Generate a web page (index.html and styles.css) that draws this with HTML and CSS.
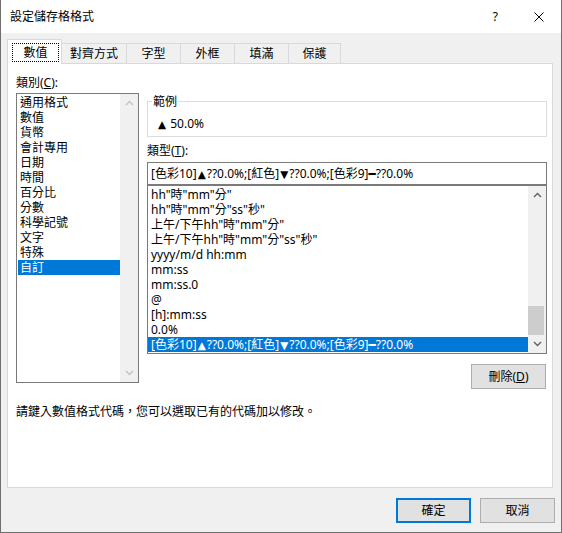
FILE: index.html
```html
<!DOCTYPE html>
<html lang="zh-Hant">
<head>
<meta charset="utf-8">
<title>設定儲存格格式</title>
<link rel="stylesheet" href="styles.css">
</head>
<body>
<div class="dialog">
  <div class="titlebar">
    <span class="title">設定儲存格格式</span>
    <span class="help">?</span>
    <span class="close"><svg width="10" height="10" viewBox="0 0 10 10"><path d="M0.5 0.5 L9.5 9.5 M9.5 0.5 L0.5 9.5" stroke="#000" stroke-width="1" fill="none"/></svg></span>
  </div>
  <div class="body">
    <div class="tabs">
      <div class="tab active"><span class="focus">數值</span></div>
      <div class="tab w65">對齊方式</div>
      <div class="tab w54">字型</div>
      <div class="tab w54">外框</div>
      <div class="tab w54">填滿</div>
      <div class="tab w52">保護</div>
    </div>
    <div class="panel">
      <div class="cols">
        <div class="leftcol">
          <div class="label">類別(<u>C</u>):</div>
          <div class="listbox cat">
            <ul class="items">
              <li>通用格式</li>
              <li>數值</li>
              <li>貨幣</li>
              <li>會計專用</li>
              <li>日期</li>
              <li>時間</li>
              <li>百分比</li>
              <li>分數</li>
              <li>科學記號</li>
              <li>文字</li>
              <li>特殊</li>
              <li class="sel">自訂</li>
            </ul>
            <div class="vscroll disabled">
              <div class="arrow"><svg width="9" height="6" viewBox="0 0 9 6"><path d="M1 5 L4.5 1.5 L8 5" fill="none" stroke="currentColor" stroke-width="1.4"/></svg></div>
              <div class="track"></div>
              <div class="arrow"><svg width="9" height="6" viewBox="0 0 9 6"><path d="M1 1 L4.5 4.5 L8 1" fill="none" stroke="currentColor" stroke-width="1.4"/></svg></div>
            </div>
          </div>
        </div>
        <div class="rightcol">
          <fieldset class="sample">
            <legend>範例</legend>
            <div class="sample-val"><span class="tri">▲</span> 50.0%</div>
          </fieldset>
          <div class="label type-label">類型(<u>T</u>):</div>
          <div class="textbox">[色彩10]<span class="tri">▲</span>??0.0%;[紅色]<span class="tri">▼</span>??0.0%;[色彩9]<span class="bar">━</span>??0.0%</div>
          <div class="listbox fmt">
            <ul class="items">
              <li>hh"時"mm"分"</li>
              <li>hh"時"mm"分"ss"秒"</li>
              <li>上午/下午hh"時"mm"分"</li>
              <li>上午/下午hh"時"mm"分"ss"秒"</li>
              <li>yyyy/m/d hh:mm</li>
              <li>mm:ss</li>
              <li>mm:ss.0</li>
              <li>@</li>
              <li>[h]:mm:ss</li>
              <li>0.0%</li>
              <li class="sel">[色彩10]<span class="tri">▲</span>??0.0%;[紅色]<span class="tri">▼</span>??0.0%;[色彩9]<span class="bar">━</span>??0.0%</li>
            </ul>
            <div class="vscroll">
              <div class="arrow"><svg width="9" height="6" viewBox="0 0 9 6"><path d="M1 5 L4.5 1.5 L8 5" fill="none" stroke="currentColor" stroke-width="1.4"/></svg></div>
              <div class="track"><div class="thumb"></div></div>
              <div class="arrow"><svg width="9" height="6" viewBox="0 0 9 6"><path d="M1 1 L4.5 4.5 L8 1" fill="none" stroke="currentColor" stroke-width="1.4"/></svg></div>
            </div>
          </div>
          <button class="btn del">刪除(<u>D</u>)</button>
        </div>
      </div>
      <div class="note">請鍵入數值格式代碼，您可以選取已有的代碼加以修改。</div>
    </div>
    <div class="footer">
      <button class="btn ok">確定</button>
      <button class="btn">取消</button>
    </div>
  </div>
</div>
</body>
</html>
```
FILE: styles.css
```css
html, body {
  margin: 0;
  padding: 0;
  background: #ffffff;
}

body {
  font-family: "Noto Sans", "Noto Sans CJK TC", sans-serif;
  font-size: 12px;
  color: #000;
}

.dialog {
  width: 562px;
  height: 533px;
  box-sizing: border-box;
  border: 1px solid #6f6f6f;
  border-top: none;
  background: #f0f0f0;
  display: flex;
  flex-direction: column;
}

.titlebar {
  height: 33px;
  background: #ffffff;
  display: flex;
  align-items: center;
  flex-shrink: 0;
}

.title {
  padding-left: 9px;
  line-height: 15px;
}

.help {
  margin-left: auto;
  margin-right: 36px;
  line-height: 15px;
}

.close {
  display: flex;
  margin-right: 17px;
}

.body {
  flex: 1;
  display: flex;
  flex-direction: column;
}

.tabs {
  display: flex;
  align-items: flex-end;
  height: 25px;
  margin-top: 6px;
  padding-left: 6px;
}

.tab {
  box-sizing: border-box;
  height: 20px;
  margin-bottom: 1px;
  border-top: 1px solid #d9d9d9;
  border-right: 1px solid #d9d9d9;
  background: #f0f0f0;
  display: flex;
  align-items: center;
  justify-content: center;
  line-height: 15px;
}

.w65 { width: 65px; }
.w54 { width: 54px; }
.w52 { width: 52px; }

.tab.active {
  height: 25px;
  margin-bottom: 0;
  border: 1px solid #d9d9d9;
  border-bottom: none;
  background: #ffffff;
  padding: 3px 2px 2px 4px;
  position: relative;
  z-index: 1;
}

.focus {
  box-sizing: border-box;
  width: 47px;
  height: 19px;
  border: 1px dotted #000;
  display: flex;
  align-items: center;
  justify-content: center;
}

.panel {
  box-sizing: border-box;
  height: 425px;
  margin: -1px 8px 0 6px;
  border: 1px solid #d9d9d9;
  background: #ffffff;
  flex-shrink: 0;
}

.cols {
  display: flex;
  gap: 8px;
  padding: 11px 0 0 8px;
}

.leftcol {
  width: 123px;
  display: flex;
  flex-direction: column;
}

.label {
  line-height: 15px;
}

.leftcol .label {
  margin-bottom: 3px;
}

.listbox {
  box-sizing: border-box;
  border: 1px solid #7a7a7a;
  background: #ffffff;
  display: flex;
}

.listbox.cat {
  height: 290px;
}

.items {
  list-style: none;
  margin: 0;
  padding: 1px 0 0 0;
  flex: 1;
  min-width: 0;
}

.items li {
  line-height: 15px;
  height: 15px;
  white-space: nowrap;
  overflow: hidden;
}

.cat .items {
  padding-left: 1px;
}

.cat .items li {
  padding-left: 2px;
}

.fmt .items li {
  padding-left: 3px;
}

.items li.sel {
  background: #0078d7;
  color: #ffffff;
}

.tri {
  font-family: "DejaVu Sans", sans-serif;
  font-size: 10.5px;
  line-height: 0;
  padding: 0 1px;
}

.bar {
  font-family: "DejaVu Sans", sans-serif;
  font-size: 12px;
  line-height: 0;
}

.vscroll {
  width: 18px;
  background: #f0f0f0;
  display: flex;
  flex-direction: column;
  color: #606060;
}

.vscroll.disabled {
  color: #c4c4c4;
}

.arrow {
  height: 18px;
  display: flex;
  align-items: center;
  justify-content: center;
  flex-shrink: 0;
}

.track {
  flex: 1;
}

.thumb {
  margin: 102px 2px 0 0;
  height: 29px;
  background: #cdcdcd;
}

.rightcol {
  width: 400px;
  margin-top: 19px;
  display: flex;
  flex-direction: column;
}

.sample {
  margin: 0;
  padding: 0;
  border: 1px solid #dcdcdc;
  min-width: 0;
}

.sample legend {
  margin-left: 4px;
  padding: 0 1px;
  line-height: 15px;
}

.sample-val {
  padding: 7px 0 5px 9px;
  line-height: 15px;
  height: 15px;
}

.type-label {
  margin-top: 6px;
}

.textbox {
  box-sizing: border-box;
  margin-top: 4px;
  height: 23px;
  border: 1px solid #7a7a7a;
  background: #ffffff;
  padding-left: 3px;
  line-height: 21px;
  white-space: nowrap;
}

.listbox.fmt {
  height: 169px;
}

.btn {
  box-sizing: border-box;
  width: 75px;
  height: 25px;
  border: 1px solid #adadad;
  background: #e1e1e1;
  font-family: "Noto Sans", "Noto Sans CJK TC", sans-serif;
  font-size: 12px;
  color: #000;
  padding: 0;
  line-height: 15px;
}

.btn.del {
  align-self: flex-end;
  margin-top: 10px;
  margin-right: 1px;
}

.btn.ok {
  border: 2px solid #0078d7;
}

.note {
  margin-top: 15px;
  padding-left: 8px;
  line-height: 15px;
}

.footer {
  display: flex;
  justify-content: flex-end;
  gap: 9px;
  margin-top: 10px;
  padding-right: 6px;
}
```
